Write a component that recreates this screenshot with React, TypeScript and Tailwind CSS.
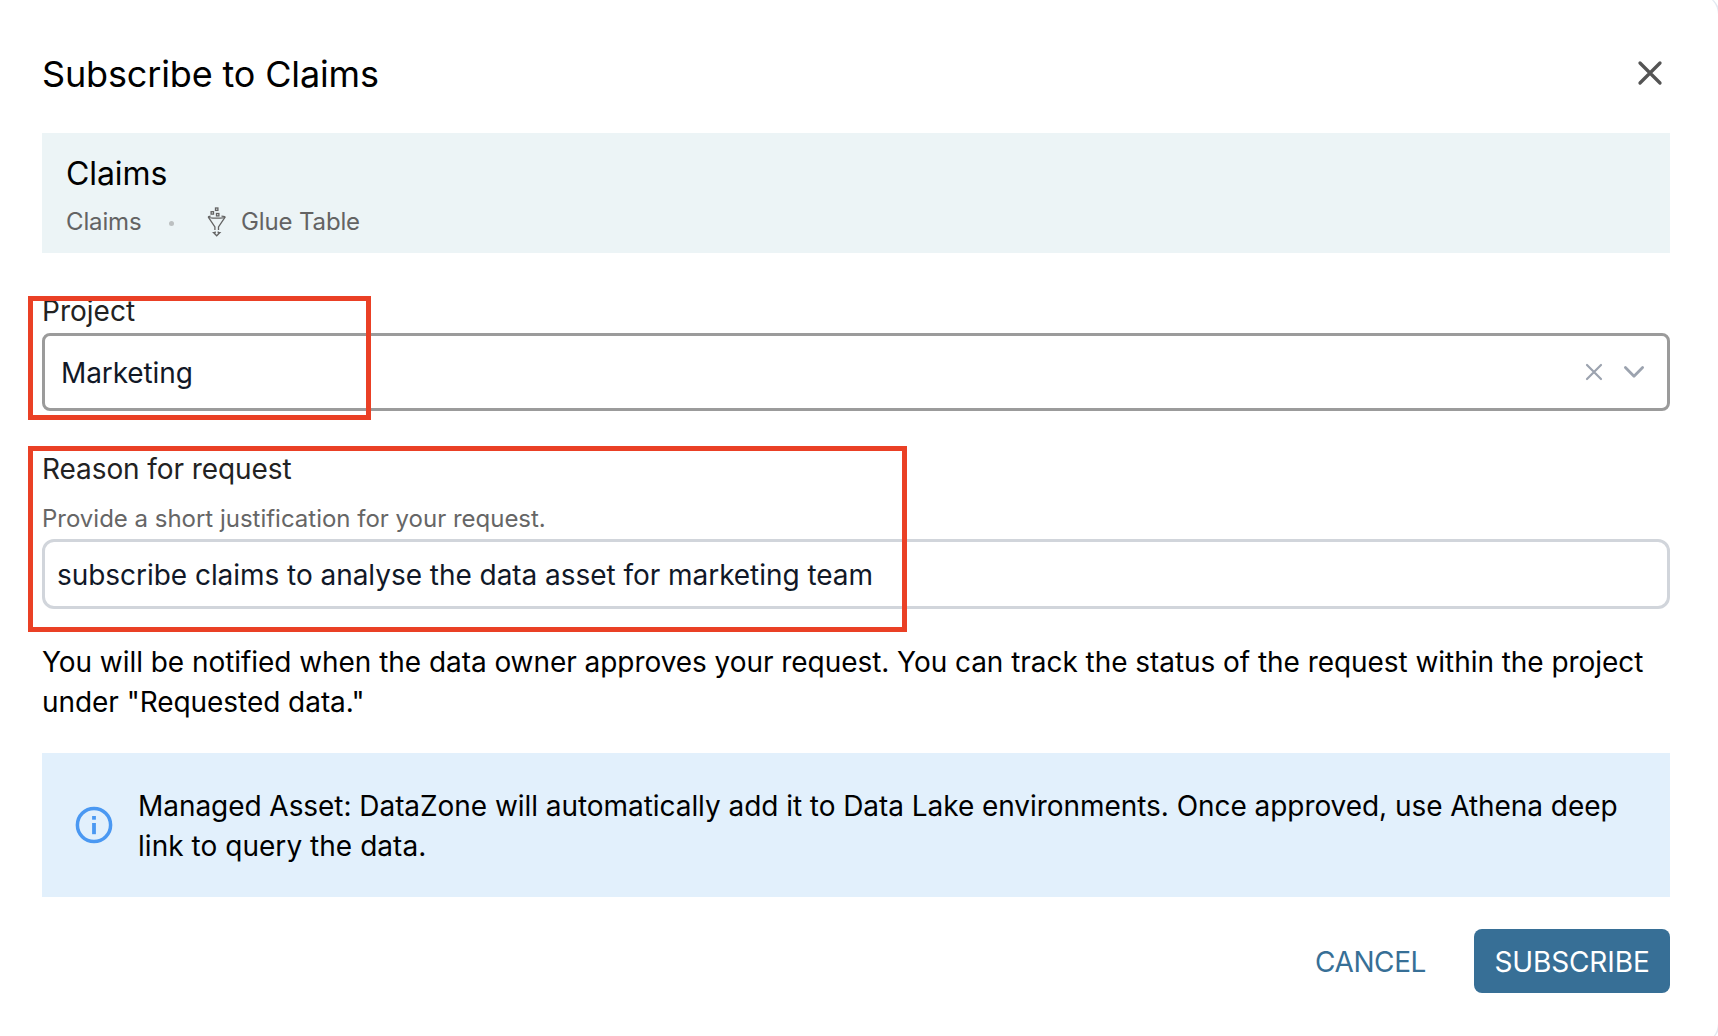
import React from "react";

function GlueIcon() {
  return (
    <svg width="20" height="30" viewBox="0 0 20 30" fill="none" stroke="#636363" strokeWidth="1.3" className="shrink-0">
      <rect x="4.1" y="4.7" width="2.4" height="2.4" />
      <rect x="8.5" y="1" width="2.4" height="2.4" />
      <rect x="9.5" y="6.5" width="2.4" height="2.4" />
      <path d="M3.6 9.2C2 9.4 1.3 9.6 1.3 10c0 .8 3.8 1.1 8.4 1.1s8.4-.3 8.4-1.1c0-.4-1.2-.7-3.6-.9" />
      <path d="M1.3 10.2 7.9 20v3M18.1 10.2 11.5 20v3" />
      <path d="M8.2 24.4v1.3H6.6l3.1 3.1 3.1-3.1h-1.6v-1.3" />
    </svg>
  );
}

function CloseIcon() {
  return (
    <svg width="28" height="28" viewBox="0 0 28 28" fill="none" stroke="#545454" strokeWidth="3.3" strokeLinecap="round">
      <path d="M4 4l20 20M24 4L4 24" />
    </svg>
  );
}

function ClearIcon() {
  return (
    <svg width="20" height="20" viewBox="0 0 20 20" fill="none" stroke="#9ca3af" strokeWidth="2.2" strokeLinecap="round">
      <path d="M3 3l14 14M17 3L3 17" />
    </svg>
  );
}

function ChevronIcon() {
  return (
    <svg width="24" height="20" viewBox="0 0 24 20" fill="none" stroke="#9ca3af" strokeWidth="2.8" strokeLinecap="round" strokeLinejoin="round">
      <path d="M3.4 5.6l8.6 8.6 8.6-8.6" />
    </svg>
  );
}

function InfoIcon() {
  return (
    <svg width="38" height="38" viewBox="0 0 38 38" className="shrink-0">
      <circle cx="19" cy="19" r="16.6" fill="none" stroke="#4a98f2" strokeWidth="3.5" />
      <rect x="17.1" y="10" width="3.8" height="3.7" fill="#4a98f2" />
      <rect x="17.1" y="17" width="3.8" height="11.2" fill="#4a98f2" />
    </svg>
  );
}

export default function App() {
  return (
    <div className="relative h-[1036px] w-[1718px] overflow-hidden bg-white pl-[42px] pr-12 pt-[54px] font-['Inter',sans-serif] text-[28px] leading-10 text-black">
      <header className="flex h-10 items-center justify-between pr-1.5">
        <h1 className="text-4xl leading-10 tracking-[-0.15px]">Subscribe to Claims</h1>
        <button aria-label="Close" className="relative -top-px">
          <CloseIcon />
        </button>
      </header>

      <section className="mt-[39px] h-[120px] bg-[#ecf4f6] pl-6 pt-[21px]">
        <h2 className="text-[32px] leading-10 tracking-[-0.1px]">Claims</h2>
        <div className="mt-3 flex h-8 items-center text-2xl leading-8 tracking-[-0.14px] text-[#636363]">
          <span className="w-[103px]">Claims</span>
          <span className="mt-[2px] size-[5px] rounded-full bg-[#bcc0c1]" />
          <span className="ml-[33px]">
            <GlueIcon />
          </span>
          <span className="ml-[14px]">Glue Table</span>
        </div>
      </section>

      <section className="mt-[38px]">
        <label className="block tracking-[0.02px] text-[#222]">Project</label>
        <div className="mt-0.5 flex h-[78px] items-center justify-between rounded-lg border-[3px] border-[#9b9b9b] pl-4 pr-[21px]">
          <span className="relative top-px tracking-[-0.1px] text-[#111827]">Marketing</span>
          <div className="flex items-center gap-[18px]">
            <ClearIcon />
            <ChevronIcon />
          </div>
        </div>
      </section>

      <section className="mt-[38px]">
        <label className="block tracking-[-0.08px] text-[#222]">Reason for request</label>
        <p className="mt-[14px] text-2xl leading-8 tracking-[-0.01px] text-[#666]">Provide a short justification for your request.</p>
        <div className="mt-1 flex h-[70px] items-center rounded-xl border-[3px] border-[#d1d5db] pl-3">
          <span className="relative top-px tracking-[-0.043px] text-[#111827]">subscribe claims to analyse the data asset for marketing team</span>
        </div>
      </section>

      <p className="mt-[33px] whitespace-nowrap tracking-[-0.052px]">
        You will be notified when the data owner approves your request. You can track the status of the request within the project
        <br />
        under "Requested data."
      </p>

      <section className="mt-[31px] flex h-36 items-center bg-[#e2f0fc] pl-[33px]">
        <InfoIcon />
        <p className="relative top-px ml-[25px] whitespace-nowrap tracking-[-0.053px]">
          Managed Asset: DataZone will automatically add it to Data Lake environments. Once approved, use Athena deep
          <br />
          <span className="tracking-[0.04px]">link to query the data.</span>
        </p>
      </section>

      <footer className="mt-8 flex items-center justify-end gap-12">
        <button className="h-16 pt-0.5 tracking-[-0.4px] text-[#376f96]">CANCEL</button>
        <button className="h-16 w-[196px] rounded-lg bg-[#376f96] pt-0.5 tracking-[-0.11px] text-white">SUBSCRIBE</button>
      </footer>

      <div className="pointer-events-none absolute left-[28px] top-[296px] h-[124px] w-[343px] border-[5px] border-[#ea4025]" />
      <div className="pointer-events-none absolute left-[28px] top-[446px] h-[186px] w-[879px] border-[5px] border-[#ea4025]" />
      <div className="pointer-events-none absolute -right-0.5 -top-[5px] h-[1048px] w-10 rounded-r-[20px] border-r-2 border-[#e2e8f0]" />
    </div>
  );
}
